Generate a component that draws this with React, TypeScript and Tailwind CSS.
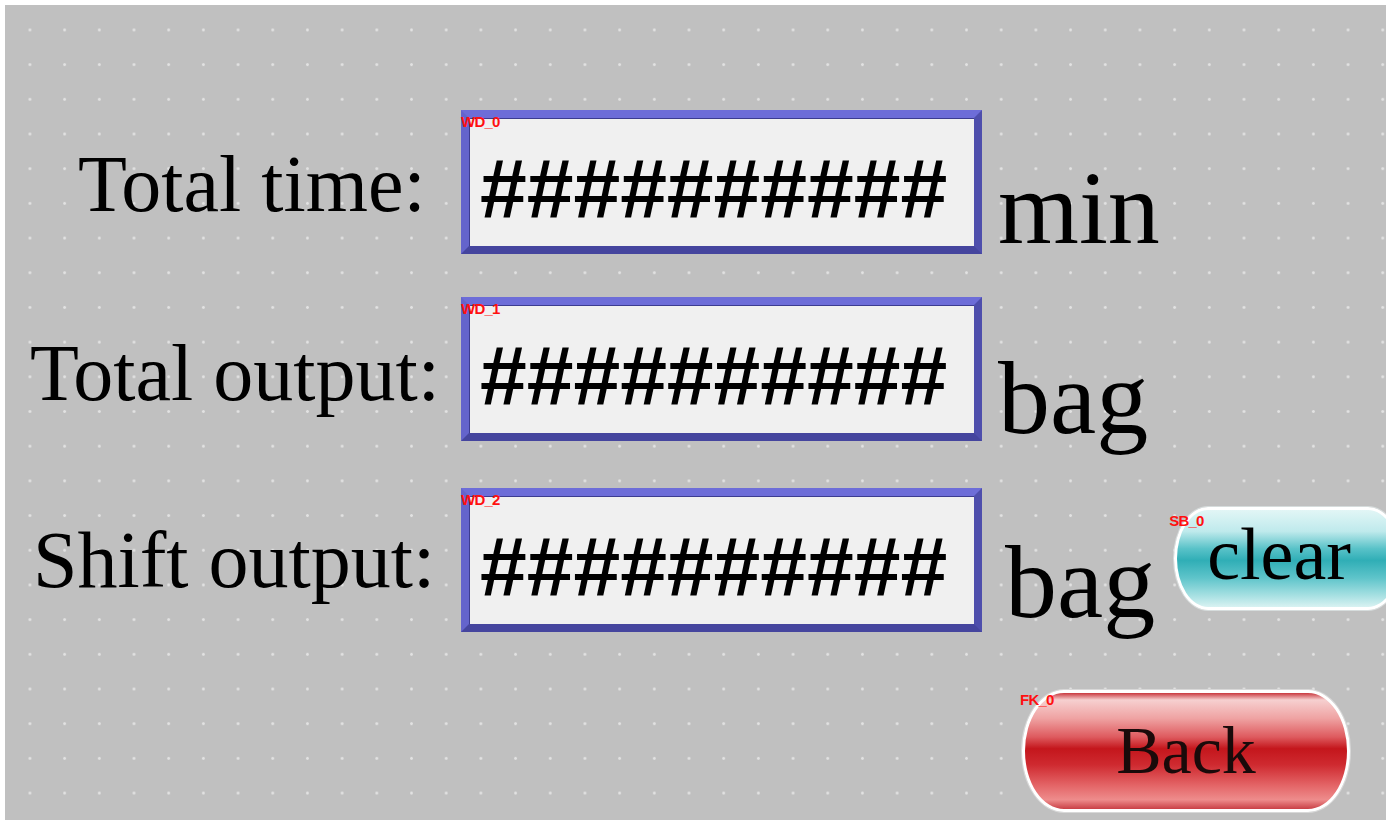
const ROWS = [
  { tag: 'WD_0', label: 'Total time:', labelLeft: 'ml-[73px]', labelTop: 'mt-[34px]', unit: 'min', unitLeft: 'ml-[16px]', unitTop: 'mt-[46px]', rowTop: 'mt-[105px]' },
  { tag: 'WD_1', label: 'Total output:', labelLeft: 'ml-[25px]', labelTop: 'mt-[36px]', unit: 'bag', unitLeft: 'ml-[16px]', unitTop: 'mt-[49px]', rowTop: 'mt-[43px]' },
  { tag: 'WD_2', label: 'Shift output:', labelLeft: 'ml-[28px]', labelTop: 'mt-[32px]', unit: 'bag', unitLeft: 'ml-[23px]', unitTop: 'mt-[42px]', rowTop: 'mt-[47px]' },
];

const Tag = ({ text, className }: { text: string; className: string }) => (
  <span className={`absolute z-10 text-[15px] leading-none font-bold text-[#ff1010] font-['Liberation_Sans',sans-serif] tracking-tighter ${className}`}>
    {text}
  </span>
);

const NumberBox = ({ tag }: { tag: string }) => (
  <div className="relative w-[521px] h-[144px] shrink-0 border-8 border-t-[#6d6dd8] border-l-[#6464cc] border-r-[#4e4eac] border-b-[#45459e] bg-[#f0f0f0] shadow-[inset_1px_1px_0_#3c3c90]">
    <Tag text={tag} className="-left-[8px] -top-[4px]" />
    <div className="pl-[11px] pt-[29px] text-[84px] leading-none font-bold text-black font-['Liberation_Sans',sans-serif] whitespace-nowrap">
      ##########
    </div>
  </div>
);

export default function App() {
  return (
    <div className="w-[1397px] h-[825px] bg-white pt-[5px] pl-[5px] overflow-hidden">
      <div className="relative w-[1381px] h-[815px] overflow-hidden bg-[#c0c0c0] bg-[radial-gradient(circle,#e2e2e2_1.1px,transparent_1.7px)] bg-[length:34.7px_34.7px] bg-[position:7.6px_7.6px] font-['Liberation_Serif',serif] text-black">
        {ROWS.map((row, i) => (
          <div key={i} className={`flex items-start h-[144px] ${row.rowTop}`}>
            <div className={`w-[456px] shrink-0 ${row.labelTop}`}>
              <span className={`block text-[80px] leading-none whitespace-nowrap ${row.labelLeft}`}>{row.label}</span>
            </div>
            <NumberBox tag={row.tag} />
            <span className={`text-[104px] leading-none shrink-0 ${row.unitLeft} ${row.unitTop}`}>{row.unit}</span>
            {i === 2 && (
              <div className="relative ml-[19px] mt-[19px] shrink-0">
                <Tag text="SB_0" className="-left-[5px] top-[6px]" />
                <button className="w-[228px] h-[103px] rounded-[34px/50%] border-[3px] border-white ring-1 ring-[#d6dcdc] bg-[linear-gradient(to_bottom,#e2f6f6_0%,#bfeaec_22%,#58c2c8_40%,#30aeb6_52%,#5ec4ca_70%,#a6e0e2_88%,#d8f2f2_100%)] flex items-center pl-[30px]">
                  <span className="text-[74px] leading-none font-['Liberation_Serif',serif] pb-[10px]">clear</span>
                </button>
              </div>
            )}
          </div>
        ))}
        <div className="flex mt-[58px] ml-[1017px]">
          <div className="relative">
            <Tag text="FK_0" className="-left-[2px] top-[2px]" />
            <button className="w-[328px] h-[122px] rounded-[42px/50%] border-[3px] border-white ring-1 ring-[#d8d8d8] bg-[linear-gradient(to_bottom,#c9383e_0%,#f6d0d0_6%,#efa2a2_22%,#de5a5e_38%,#c4161c_48%,#cf2a30_62%,#e46668_80%,#ee8c8c_92%,#c94046_100%)] flex items-center justify-center">
              <span className="text-[68px] leading-none font-['Liberation_Serif',serif] text-[#1a0a0a] pb-[2px]">Back</span>
            </button>
          </div>
        </div>
      </div>
    </div>
  );
}
